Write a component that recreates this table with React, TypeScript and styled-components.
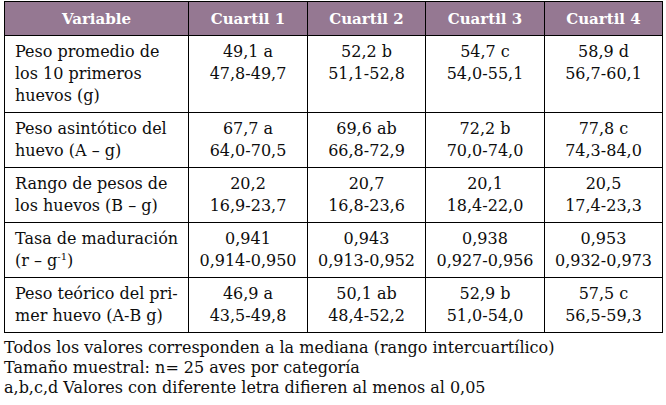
import React from 'react';
import styled, { createGlobalStyle } from 'styled-components';

const GlobalStyle = createGlobalStyle`
  html, body {
    margin: 0;
    padding: 0;
    background: #fff;
  }
  body {
    font-family: 'DejaVu Serif', 'Liberation Serif', serif;
    color: #0d0d0d;
  }
`;

const Page = styled.main`
  width: 666px;
  padding: 1px 0 0 4px;
  box-sizing: border-box;
`;

const Table = styled.table`
  width: 658px;
  border-collapse: collapse;
  table-layout: fixed;
  font-size: 16px;
`;

const HeadCell = styled.th`
  background: #957892;
  color: #fff;
  font-size: 15px;
  font-weight: 700;
  height: 33px;
  padding: 0;
  border: 1px solid #000;
  text-align: center;
  vertical-align: middle;
  line-height: 20px;
`;

const LabelCell = styled.td`
  border: 1px solid #000;
  padding: 5px 4px 5px 10px;
  line-height: 22px;
  vertical-align: top;
  text-align: left;
  white-space: nowrap;
`;

const ValueCell = styled.td`
  border: 1px solid #000;
  padding: 5px 0;
  line-height: 22px;
  vertical-align: top;
  text-align: center;
  white-space: nowrap;
`;

const Sup = styled.sup`
  font-size: 10px;
  line-height: 0;
  vertical-align: 6px;
`;

const Notes = styled.div`
  margin-top: 5px;
  font-size: 16px;
  line-height: 20px;
`;

type Row = {
  label: React.ReactNode;
  values: [string, string][];
};

const rows: Row[] = [
  {
    label: (
      <>
        Peso promedio de
        <br />
        los 10 primeros
        <br />
        huevos (g)
      </>
    ),
    values: [
      ['49,1 a', '47,8-49,7'],
      ['52,2 b', '51,1-52,8'],
      ['54,7 c', '54,0-55,1'],
      ['58,9 d', '56,7-60,1'],
    ],
  },
  {
    label: (
      <>
        Peso asintótico del
        <br />
        huevo (A – g)
      </>
    ),
    values: [
      ['67,7 a', '64,0-70,5'],
      ['69,6 ab', '66,8-72,9'],
      ['72,2 b', '70,0-74,0'],
      ['77,8 c', '74,3-84,0'],
    ],
  },
  {
    label: (
      <>
        Rango de pesos de
        <br />
        los huevos (B – g)
      </>
    ),
    values: [
      ['20,2', '16,9-23,7'],
      ['20,7', '16,8-23,6'],
      ['20,1', '18,4-22,0'],
      ['20,5', '17,4-23,3'],
    ],
  },
  {
    label: (
      <>
        Tasa de maduración
        <br />
        (r – g<Sup>-1</Sup>)
      </>
    ),
    values: [
      ['0,941', '0,914-0,950'],
      ['0,943', '0,913-0,952'],
      ['0,938', '0,927-0,956'],
      ['0,953', '0,932-0,973'],
    ],
  },
  {
    label: (
      <>
        Peso teórico del pri-
        <br />
        mer huevo (A-B g)
      </>
    ),
    values: [
      ['46,9 a', '43,5-49,8'],
      ['50,1 ab', '48,4-52,2'],
      ['52,9 b', '51,0-54,0'],
      ['57,5 c', '56,5-59,3'],
    ],
  },
];

function App() {
  return (
    <>
      <GlobalStyle />
      <Page>
        <Table>
          <colgroup>
            <col style={{ width: 184 }} />
            <col style={{ width: 119 }} />
            <col style={{ width: 118 }} />
            <col style={{ width: 119 }} />
            <col style={{ width: 118 }} />
          </colgroup>
          <thead>
            <tr>
              <HeadCell>Variable</HeadCell>
              <HeadCell>Cuartil 1</HeadCell>
              <HeadCell>Cuartil 2</HeadCell>
              <HeadCell>Cuartil 3</HeadCell>
              <HeadCell>Cuartil 4</HeadCell>
            </tr>
          </thead>
          <tbody>
            {rows.map((row, i) => (
              <tr key={i}>
                <LabelCell>{row.label}</LabelCell>
                {row.values.map(([median, range], j) => (
                  <ValueCell key={j}>
                    {median}
                    <br />
                    {range}
                  </ValueCell>
                ))}
              </tr>
            ))}
          </tbody>
        </Table>
        <Notes>
          Todos los valores corresponden a la mediana (rango intercuartílico)
          <br />
          Tamaño muestral: n= 25 aves por categoría
          <br />
          a,b,c,d Valores con diferente letra difieren al menos al 0,05
        </Notes>
      </Page>
    </>
  );
}

export default App;
